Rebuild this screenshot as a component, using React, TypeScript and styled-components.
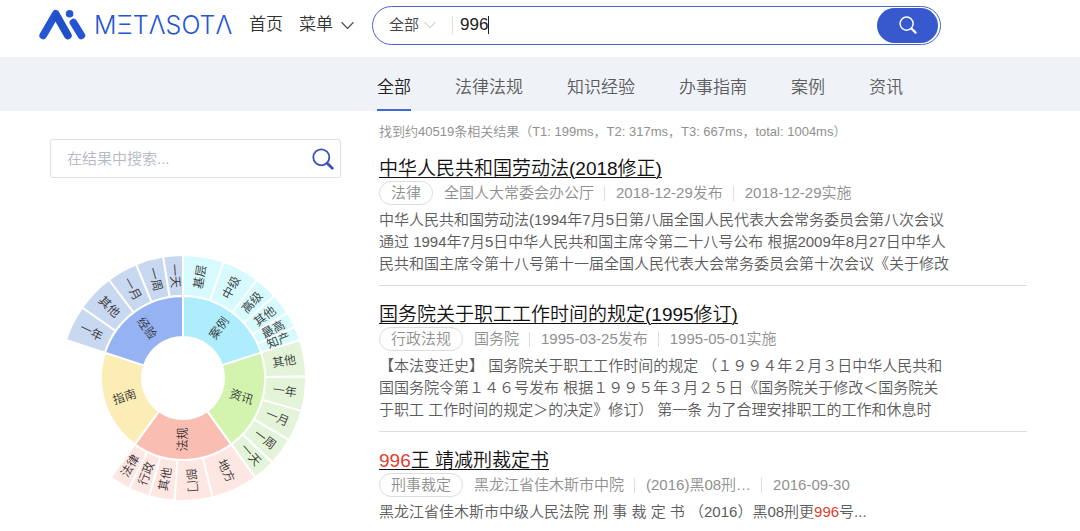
import React from "react";
import styled, { createGlobalStyle } from "styled-components";

const GlobalStyle = createGlobalStyle`
  *, *::before, *::after { box-sizing: border-box; }
  body {
    margin: 0;
    background: #fff;
    color: #5c5c5c;
    font-family: "Liberation Sans", "Noto Sans CJK SC", sans-serif;
    font-weight: 350;
    font-size: 15px;
    line-height: 22px;
  }
  button, input, select { font: inherit; color: inherit; }
  h2, p { margin: 0; font-weight: inherit; }
`;

const Header = styled.header`
  display: flex;
  align-items: center;
  height: 57px;
  padding: 0 139px 7px 38px;
`;

const Brand = styled.a`
  display: flex;
  align-items: center;
  gap: 8px;
  width: 196px;
  color: #2455d3;
  text-decoration: none;
`;

const Wordmark = styled.span`
  font-family: Inter, sans-serif;
  font-weight: 300;
  font-size: 25px;
  line-height: 30px;
`;

const MainNav = styled.nav`
  display: flex;
  align-items: center;
  gap: 16px;
  margin-left: 15px;
  color: #333;
  font-size: 17px;
`;

const NavLink = styled.a`
  color: inherit;
  text-decoration: none;
  white-space: nowrap;
`;

const MenuButton = styled.button`
  display: flex;
  align-items: center;
  gap: 8px;
  padding: 0;
  border: 0;
  background: none;
  white-space: nowrap;
`;

const SearchForm = styled.form`
  display: flex;
  align-items: center;
  flex: 1;
  height: 39px;
  margin-left: 18px;
  padding: 1px 2px 1px 16px;
  border: 1px solid #4a66c4;
  border-radius: 20px;
`;

const ScopePicker = styled.label`
  display: flex;
  align-items: center;
  gap: 5px;
  padding-right: 16px;
  border-right: 1px solid #ddd;
  line-height: 18px;
  color: #444;
`;

const ScopeSelect = styled.select`
  appearance: none;
  width: 30px;
  padding: 0;
  border: 0;
  background: none;
`;

const QueryField = styled.label`
  display: flex;
  align-items: center;
  flex: 1;
  padding-left: 7px;
`;

const QueryInput = styled.input`
  field-sizing: content;
  padding: 0;
  border: 0;
  outline: 0;
  background: none;
  color: #222;
  font-size: 17px;
`;

const Caret = styled.span`
  width: 1px;
  height: 18px;
  background: #222;
`;

const SearchButton = styled.button`
  display: flex;
  align-items: center;
  justify-content: center;
  width: 61px;
  height: 35px;
  padding: 0;
  border: 0;
  border-radius: 18px;
  background: #3859cd;
  color: #fff;
`;

const TabBar = styled.nav`
  display: flex;
  gap: 44px;
  height: 54px;
  padding-left: 377px;
  background: #eff3f8;
  font-size: 17px;
`;

const Tab = styled.a<{ $active?: boolean }>`
  display: flex;
  align-items: center;
  padding-top: 10px;
  border-bottom: 2px solid ${(p) => (p.$active ? "#3f6bd8" : "transparent")};
  color: ${(p) => (p.$active ? "#222" : "#5c5c5c")};
  text-decoration: none;
  white-space: nowrap;
`;

const Content = styled.main`
  display: grid;
  grid-template-columns: 291px minmax(0, 1fr);
  gap: 38px;
  padding: 0 53px 0 50px;
`;

const Sidebar = styled.aside`
  padding-top: 28px;
`;

const RefineForm = styled.form`
  display: flex;
  align-items: center;
  height: 39px;
  padding: 0 6px 0 16px;
  border: 1px solid #dcdfe6;
  border-radius: 3px;
`;

const RefineInput = styled.input`
  flex: 1;
  min-width: 0;
  padding: 0;
  border: 0;
  outline: 0;
  background: none;
  &::placeholder { color: #b4b9c4; opacity: 1; }
`;

const IconButton = styled.button`
  display: flex;
  padding: 0;
  border: 0;
  background: none;
  color: #3a50c0;
`;

const ChartFigure = styled.figure`
  margin: 76px 0 0 9px;
`;

const ChartLabel = styled.text`
  font-size: 12px;
  fill: #333;
  text-anchor: middle;
  dominant-baseline: central;
`;

const Summary = styled.p`
  padding-top: 10px;
  padding-bottom: 13px;
  color: #909090;
  font-size: 13px;
`;

const Result = styled.article`
  margin-bottom: 16px;
  padding: 1px 0 10px;
  border-bottom: 1px solid #ddd;
  &:last-child { border-bottom: 0; margin-bottom: 0; }
`;

const ResultTitle = styled.h2`
  font-size: 19px;
  line-height: 24px;
`;

const TitleLink = styled.a`
  color: #111;
  text-decoration: underline;
  text-decoration-thickness: 1px;
  text-underline-offset: 2px;
`;

const Hit = styled.em`
  color: #e0402f;
  font-style: normal;
`;

const MetaRow = styled.div`
  display: flex;
  align-items: center;
  height: 24px;
  margin-bottom: 4px;
  color: #909090;
  white-space: nowrap;
`;

const Tag = styled.span`
  height: 24px;
  margin-right: 11px;
  padding: 0 11px;
  border: 1px solid #ddd;
  border-radius: 12px;
`;

const MetaItem = styled.span`
  display: flex;
  align-items: center;
  & + &::before {
    content: "";
    width: 1px;
    height: 15px;
    margin: 0 11px 0 10px;
    background: #ddd;
  }
`;

const Snippet = styled.p`
  white-space: nowrap;
`;

const Chevron = ({ color, size }: { color: string; size: number }) => (
  <svg width={size} height={size} viewBox="0 0 12 12" fill="none" stroke={color} strokeWidth="1" aria-hidden="true">
    <path d="M0.5 3 6 8.7 11.5 3" />
  </svg>
);

const Magnifier = ({ size, weight }: { size: number; weight: number }) => (
  <svg width={size} height={size} viewBox="0 0 22 22" fill="none" stroke="currentColor" strokeLinecap="round" aria-hidden="true">
    <circle cx="9.3" cy="9.3" r="8" strokeWidth={weight} />
    <path d="M15.2 15.2 20.3 20.3" strokeWidth={weight + 1} />
  </svg>
);

const LogoMark = () => (
  <svg width="48" height="34" viewBox="38 8 48 34" fill="none" stroke="#2455d3" strokeLinecap="round" strokeLinejoin="round" strokeWidth="7.6" aria-hidden="true">
    <path d="M43.2 35.4 55.7 13.8 67.8 35.4" />
    <path d="M57 17 67.8 35.4" stroke="#1d49bd" strokeOpacity="0.5" />
    <path d="M73.4 22.6 81.4 35.4" />
    <circle cx="69.6" cy="13.8" r="3.8" fill="#2455d3" stroke="none" />
  </svg>
);

type Group = {
  name: string;
  color: string;
  childColor: string;
  from: number;
  children: [string, number][];
};

// Every group spans 72 degrees; each child gives its name and the angle where it ends.
const groups: Group[] = [
  { name: "案例", color: "#aeedfd", childColor: "#d6fafe", from: 0, children: [["基层", 19.3], ["中级", 37], ["高级", 48], ["其他", 58], ["最高", 65.4], ["知产", 72]] },
  { name: "资讯", color: "#d2f4ae", childColor: "#e4f4d9", from: 72, children: [["其他", 89.3], ["一年", 105.5], ["一月", 120.3], ["一周", 133.4], ["一天", 144]] },
  { name: "法规", color: "#f9beb1", childColor: "#fee6e3", from: 144, children: [["地方", 166.1], ["部门", 184], ["其他", 196], ["行政", 206], ["法律", 216]] },
  { name: "指南", color: "#fcedb6", childColor: "#fcedb6", from: 216, children: [] },
  { name: "经验", color: "#95b2f3", childColor: "#c8d8f0", from: 288, children: [["一年", 305], ["其他", 323], ["一月", 337.6], ["一周", 350.7], ["一天", 360]] },
];

const point = (radius: number, angle: number) => {
  const rad = (angle * Math.PI) / 180;
  return `${(radius * Math.sin(rad)).toFixed(2)} ${(-radius * Math.cos(rad)).toFixed(2)}`;
};

const Sector = ({ name, fill, from, to, inner, outer }: { name: string; fill: string; from: number; to: number; inner: number; outer: number }) => {
  const mid = (from + to) / 2;
  const turn = mid < 180 ? mid - 90 : mid === 180 ? -90 : mid + 90;
  return (
    <g>
      <path
        d={`M${point(inner, from)}L${point(outer, from)}A${outer} ${outer} 0 0 1 ${point(outer, to)}L${point(inner, to)}A${inner} ${inner} 0 0 0 ${point(inner, from)}Z`}
        fill={fill}
        stroke="#fff"
        strokeWidth="2"
      />
      <ChartLabel transform={`translate(${point((inner + outer) / 2, mid)}) rotate(${turn})`}>{name}</ChartLabel>
    </g>
  );
};

const Sunburst = () => (
  <svg width="248" height="248" viewBox="-124 -124 248 248" role="img" aria-label="结果分类">
    {groups.map((g) => (
      <g key={g.name}>
        {g.children.map(([name, to], i) => (
          <Sector key={name} name={name} fill={g.childColor} from={i ? g.children[i - 1][1] : g.from} to={to} inner={82} outer={123} />
        ))}
        <Sector name={g.name} fill={g.color} from={g.from} to={g.from + 72} inner={41} outer={82} />
      </g>
    ))}
  </svg>
);

const tabs = ["全部", "法律法规", "知识经验", "办事指南", "案例", "资讯"];

const results: { title: React.ReactNode; tag: string; meta: string[]; lines: React.ReactNode[] }[] = [
  {
    title: "中华人民共和国劳动法(2018修正)",
    tag: "法律",
    meta: ["全国人大常委会办公厅", "2018-12-29发布", "2018-12-29实施"],
    lines: [
      "中华人民共和国劳动法(1994年7月5日第八届全国人民代表大会常务委员会第八次会议",
      "通过 1994年7月5日中华人民共和国主席令第二十八号公布 根据2009年8月27日中华人",
      "民共和国主席令第十八号第十一届全国人民代表大会常务委员会第十次会议《关于修改",
    ],
  },
  {
    title: "国务院关于职工工作时间的规定(1995修订)",
    tag: "行政法规",
    meta: ["国务院", "1995-03-25发布", "1995-05-01实施"],
    lines: [
      "【本法变迁史】 国务院关于职工工作时间的规定 （１９９４年２月３日中华人民共和",
      "国国务院令第１４６号发布 根据１９９５年３月２５日《国务院关于修改＜国务院关",
      "于职工 工作时间的规定＞的决定》修订） 第一条 为了合理安排职工的工作和休息时",
    ],
  },
  {
    title: <><Hit>996</Hit>王 靖减刑裁定书</>,
    tag: "刑事裁定",
    meta: ["黑龙江省佳木斯市中院", "(2016)黑08刑…", "2016-09-30"],
    lines: [<>黑龙江省佳木斯市中级人民法院 刑 事 裁 定 书 （2016）黑08刑更<Hit>996</Hit>号...</>],
  },
];

export default function App() {
  return (
    <>
      <GlobalStyle />
      <Header>
        <Brand href="#">
          <LogoMark />
          <Wordmark>MΞTΛSOTΛ</Wordmark>
        </Brand>
        <MainNav>
          <NavLink href="#">首页</NavLink>
          <MenuButton type="button">菜单<Chevron color="#444" size={13} /></MenuButton>
        </MainNav>
        <SearchForm onSubmit={(e) => e.preventDefault()}>
          <ScopePicker>
            <ScopeSelect aria-label="搜索范围" defaultValue="全部">
              <option>全部</option>
            </ScopeSelect>
            <Chevron color="#bbb" size={12} />
          </ScopePicker>
          <QueryField>
            <QueryInput aria-label="关键词" defaultValue="996" />
            <Caret />
          </QueryField>
          <SearchButton type="submit" aria-label="搜索"><Magnifier size={18} weight={1.8} /></SearchButton>
        </SearchForm>
      </Header>
      <TabBar>
        {tabs.map((t, i) => <Tab key={t} href="#" $active={i === 0}>{t}</Tab>)}
      </TabBar>
      <Content>
        <Sidebar>
          <RefineForm onSubmit={(e) => e.preventDefault()}>
            <RefineInput aria-label="在结果中搜索" placeholder="在结果中搜索..." />
            <IconButton type="submit" aria-label="在结果中搜索"><Magnifier size={22} weight={1.8} /></IconButton>
          </RefineForm>
          <ChartFigure><Sunburst /></ChartFigure>
        </Sidebar>
        <section>
          <Summary>找到约40519条相关结果（T1: 199ms，T2: 317ms，T3: 667ms，total: 1004ms）</Summary>
          {results.map((r) => (
            <Result key={r.tag}>
              <ResultTitle><TitleLink href="#">{r.title}</TitleLink></ResultTitle>
              <MetaRow>
                <Tag>{r.tag}</Tag>
                {r.meta.map((m) => <MetaItem key={m}>{m}</MetaItem>)}
              </MetaRow>
              <Snippet>
                {r.lines.map((line, i) => <React.Fragment key={i}>{i > 0 && <br />}{line}</React.Fragment>)}
              </Snippet>
            </Result>
          ))}
        </section>
      </Content>
    </>
  );
}
